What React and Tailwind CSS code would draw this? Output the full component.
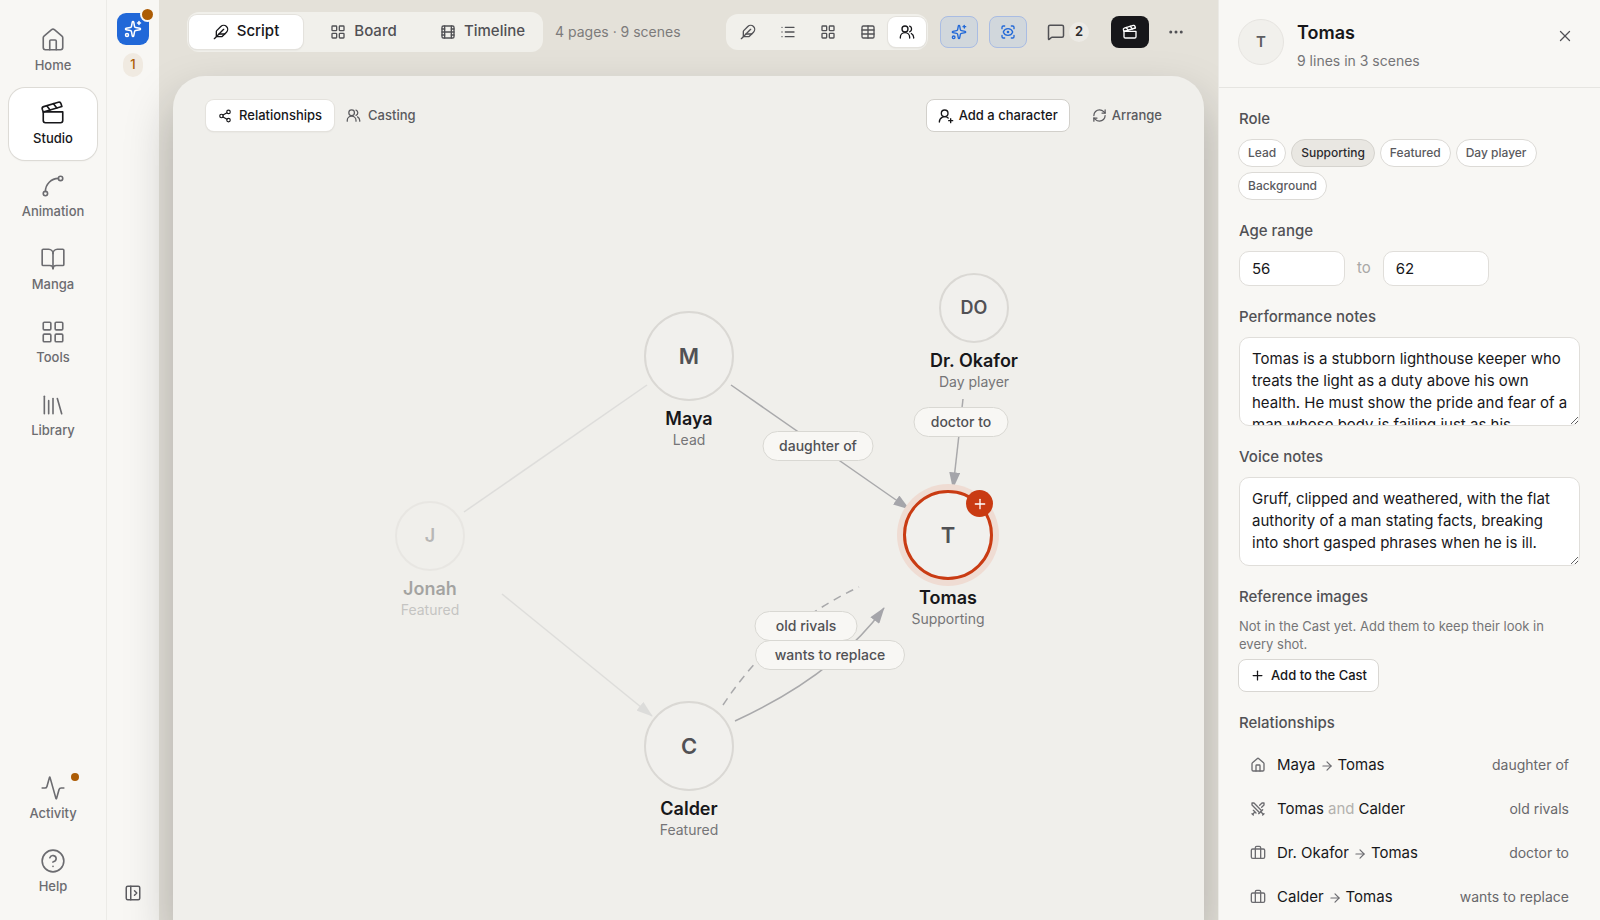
import React from 'react';
import {
  Activity,
  ArrowRight,
  BookOpen,
  Briefcase,
  CircleHelp,
  Clapperboard,
  Ellipsis,
  Feather,
  Film,
  House,
  LayoutGrid,
  Library,
  List,
  MessageSquare,
  PanelLeftOpen,
  Plus,
  RefreshCw,
  ScanEye,
  Share2,
  Sparkles,
  Spline,
  Swords,
  Table,
  UserRoundPlus,
  X,
} from 'lucide-react';

const People = ({ size }) => (
  <svg width={size} height={size} viewBox="0 0 24 24" fill="none" stroke="currentColor" strokeWidth="2" strokeLinecap="round" strokeLinejoin="round">
    <circle cx="9" cy="7.5" r="4.5" />
    <path d="M2 21v-1a7 7 0 0 1 14 0v1" />
    <path d="M16 3.3a4.5 4.5 0 0 1 0 8.4" />
    <path d="M18.5 14.2a7 7 0 0 1 3.5 5.8v1" />
  </svg>
);

const mainNav = [
  { label: 'Home', icon: House },
  { label: 'Studio', icon: Clapperboard, active: true },
  { label: 'Animation', icon: Spline },
  { label: 'Manga', icon: BookOpen },
  { label: 'Tools', icon: LayoutGrid },
  { label: 'Library', icon: Library },
];

const footerNav = [
  { label: 'Activity', icon: Activity, dot: true },
  { label: 'Help', icon: CircleHelp },
];

const modes = [
  { label: 'Script', icon: Feather, active: true },
  { label: 'Board', icon: LayoutGrid },
  { label: 'Timeline', icon: Film },
];

const views = [
  { label: 'Write', icon: Feather },
  { label: 'Outline', icon: List },
  { label: 'Cards', icon: LayoutGrid },
  { label: 'Breakdown', icon: Table },
  { label: 'Characters', icon: People, active: true },
];

// x / y are the centre of each circle on the canvas
const characters = [
  { name: 'Maya', initials: 'M', role: 'Lead', x: 516, y: 280, big: true },
  { name: 'Dr. Okafor', initials: 'DO', role: 'Day player', x: 801, y: 232 },
  { name: 'Tomas', initials: 'T', role: 'Supporting', x: 775, y: 459, big: true, selected: true },
  { name: 'Jonah', initials: 'J', role: 'Featured', x: 257, y: 460, faded: true },
  { name: 'Calder', initials: 'C', role: 'Featured', x: 516, y: 670, big: true },
];

const edgeLabels = [
  { text: 'daughter of', x: 645, y: 370, width: 111 },
  { text: 'doctor to', x: 788, y: 346, width: 95 },
  { text: 'old rivals', x: 633, y: 550, width: 103 },
  { text: 'wants to replace', x: 657, y: 579, width: 150 },
];

const roles = ['Lead', 'Supporting', 'Featured', 'Day player', 'Background'];

const relationships = [
  { from: 'Maya', to: 'Tomas', kind: 'daughter of', icon: House },
  { from: 'Tomas', to: 'Calder', kind: 'old rivals', icon: Swords, mutual: true },
  { from: 'Dr. Okafor', to: 'Tomas', kind: 'doctor to', icon: Briefcase },
  { from: 'Calder', to: 'Tomas', kind: 'wants to replace', icon: Briefcase },
];

const NavItem = ({ label, icon: Icon, active, dot }) => (
  <a
    href="#"
    className={
      active
        ? 'relative flex h-[72px] flex-col items-center rounded-2xl bg-white pt-3 text-[#17171a] shadow-[0_0_0_1px_#dddbd6,0_1px_2px_rgba(0,0,0,0.08)]'
        : 'relative flex h-[72px] flex-col items-center rounded-2xl pt-3 text-[#6c6c70]'
    }
  >
    <Icon size={26} strokeWidth={1.5} />
    <span className="mt-1 text-[13px] leading-4 font-medium">{label}</span>
    {dot && <span className="absolute top-[10px] right-[18px] size-2 rounded-full bg-[#ac5c05]" />}
  </a>
);

const Sidebar = () => (
  <nav className="flex w-[107px] shrink-0 flex-col justify-between border-r border-[#ecebe7] bg-[#f8f7f4] px-[9px] pt-[15px] pb-3">
    <div className="flex flex-col gap-px">
      {mainNav.map((item) => (
        <NavItem key={item.label} {...item} />
      ))}
    </div>
    <div className="flex flex-col gap-px">
      {footerNav.map((item) => (
        <NavItem key={item.label} {...item} />
      ))}
    </div>
  </nav>
);

const AssistantRail = () => (
  <aside className="flex w-[52px] shrink-0 flex-col items-center bg-[#f8f7f4] pt-[13px] pb-[18px]">
    <button aria-label="Assistant" className="relative flex size-8 items-center justify-center rounded-[9px] bg-[#2168d8] text-white">
      <Sparkles size={18} />
      <span className="absolute -top-1 -right-1 size-[11px] rounded-full bg-[#ac5c05] ring-2 ring-[#f8f7f4]" />
    </button>
    <span className="mt-2 flex h-6 w-5 items-center justify-center rounded-full bg-[#f0eae1] text-[13px] font-medium text-[#ac5c05]">1</span>
    <button aria-label="Open panel" className="mt-auto text-[#5d5d61]">
      <PanelLeftOpen size={18} />
    </button>
  </aside>
);

const TopBar = () => (
  <header className="flex h-[63px] items-center pr-[33px] pl-7">
    <div className="flex h-10 items-center gap-[2px] rounded-xl bg-[#f1f0eb] p-[2px]">
      {modes.map(({ label, icon: Icon, active }) => (
        <button
          key={label}
          className={
            active
              ? 'flex h-[34px] w-[114px] items-center justify-center gap-2 rounded-lg bg-white text-[15px] font-medium text-[#17171a] shadow-[0_0_0_1px_#e4e2dd,0_1px_2px_rgba(0,0,0,0.1)]'
              : 'flex h-[34px] w-[117px] items-center justify-center gap-2 rounded-lg text-[15px] font-medium text-[#515155]'
          }
        >
          <Icon size={16} />
          {label}
        </button>
      ))}
    </div>
    <p className="ml-3 text-sm text-[#7c7b7b]">4 pages · 9 scenes</p>

    <div className="ml-auto flex h-9 items-center rounded-xl bg-[#f1f0eb] p-[2px]">
      {views.map(({ label, icon: Icon, active }) => (
        <button
          key={label}
          aria-label={label}
          className={
            active
              ? 'flex h-[30px] w-[38px] items-center justify-center rounded-lg bg-white text-[#17171a] shadow-[0_0_0_1px_#e4e2dd,0_1px_2px_rgba(0,0,0,0.1)]'
              : 'flex h-[30px] w-10 items-center justify-center text-[#515155]'
          }
        >
          <Icon size={16} />
        </button>
      ))}
    </div>
    <div className="ml-3 flex items-center gap-[11px]">
      <button aria-label="Suggestions" className="flex h-8 w-[38px] items-center justify-center rounded-lg border border-[#a9bce3] bg-[#d1d7dc] text-[#2168d8]">
        <Sparkles size={16} />
      </button>
      <button aria-label="Focus" className="flex h-8 w-[38px] items-center justify-center rounded-lg border border-[#a9bce3] bg-[#d1d7dc] text-[#2168d8]">
        <ScanEye size={16} />
      </button>
    </div>
    <button aria-label="Comments" className="ml-5 flex items-center gap-1 text-[#515155]">
      <MessageSquare size={18} />
      <span className="flex size-5 items-center justify-center rounded-full bg-[#eceae5] text-[13px] font-semibold text-[#2b2b2e]">2</span>
    </button>
    <button aria-label="Shoot" className="ml-[22px] flex h-8 w-[38px] items-center justify-center rounded-lg bg-[#17171a] text-white">
      <Clapperboard size={16} />
    </button>
    <button aria-label="More" className="ml-[18px] text-[#515155]">
      <Ellipsis size={18} />
    </button>
  </header>
);

const Edges = () => (
  <svg className="absolute inset-0 h-full w-full" fill="none" stroke="#a9a9ab" strokeWidth="1.5">
    <defs>
      <marker id="arrow" viewBox="0 0 18 12" refX="17" refY="6" markerWidth="17" markerHeight="11" markerUnits="userSpaceOnUse" orient="auto">
        <path d="M0 0 L18 6 L0 12 z" fill="#a5a5aa" stroke="none" />
      </marker>
    </defs>
    <g opacity="0.25">
      <path d="M291 436 L474 309" />
      <path d="M329 518 L479 640" markerEnd="url(#arrow)" />
    </g>
    <path d="M558 309 L736 433" markerEnd="url(#arrow)" />
    <path d="M790 323 L780 412" markerEnd="url(#arrow)" />
    <path d="M550 629 Q602 550 686 511" strokeDasharray="8 6" />
    <path d="M562 645 Q662 599 711 532" markerEnd="url(#arrow)" />
  </svg>
);

const Character = ({ name, initials, role, x, y, big, selected, faded }) => {
  const radius = big ? 45 : 35;
  let circle = 'size-[70px] border-2 border-[#dad8d4] text-lg';
  if (big) circle = 'size-[90px] border-2 border-[#dad8d4] text-[22px]';
  if (selected) circle = 'size-[90px] border-3 border-[#c93b13] text-[22px] shadow-[0_0_0_6px_#efdcd3]';

  return (
    <div
      className={faded ? 'absolute flex -translate-x-1/2 flex-col items-center opacity-35' : 'absolute flex -translate-x-1/2 flex-col items-center'}
      style={{ left: x, top: y - radius }}
    >
      <div className={`relative flex items-center justify-center rounded-full bg-[#f1f0ed] font-semibold text-[#515155] ${circle}`}>
        {initials}
        {selected && (
          <button aria-label="Add a relationship" className="absolute -top-[3px] -right-[3px] flex size-[27px] items-center justify-center rounded-full bg-[#c93b13] text-white">
            <Plus size={16} />
          </button>
        )}
      </div>
      <h3 className="mt-[6px] text-lg leading-6 font-semibold whitespace-nowrap text-[#17171a]">{name}</h3>
      <p className="text-sm leading-[18px] whitespace-nowrap text-[#757577]">{role}</p>
    </div>
  );
};

const Canvas = () => (
  <main className="relative mx-[14px] mt-[13px] flex-1 rounded-t-[32px] bg-[#f0efeb] shadow-[0_24px_48px_rgba(23,23,26,0.26)]">
    <Edges />
    {characters.map((c) => (
      <Character key={c.name} {...c} />
    ))}
    {edgeLabels.map(({ text, x, y, width }) => (
      <span
        key={text}
        className="absolute flex h-[30px] -translate-x-1/2 -translate-y-1/2 items-center justify-center rounded-full border border-[#d9d8d3] bg-[#f8f7f4] text-sm font-medium whitespace-nowrap text-[#515155]"
        style={{ left: x, top: y, width }}
      >
        {text}
      </span>
    ))}
    <div className="relative flex items-center pt-[23px] pr-[42px] pl-[33px]">
      <button className="flex h-[31px] items-center gap-[7px] rounded-lg bg-white px-3 text-[13px] font-medium text-[#17171a] shadow-[0_0_0_1px_#e4e2dd,0_1px_2px_rgba(0,0,0,0.1)]">
        <Share2 size={14} />
        Relationships
      </button>
      <button className="ml-3 flex h-[31px] items-center gap-[7px] text-[13px] font-medium text-[#5a5a5e]">
        <People size={15} />
        Casting
      </button>
      <button className="ml-auto flex h-[33px] items-center gap-[5px] rounded-lg border border-[#d2d0cb] bg-white px-[11px] text-[13px] font-medium text-[#17171a]">
        <UserRoundPlus size={16} />
        Add a character
      </button>
      <button className="ml-[22px] flex h-[33px] items-center gap-[5px] text-[13px] font-medium text-[#5a5a5e]">
        <RefreshCw size={15} />
        Arrange
      </button>
    </div>
  </main>
);

const labelClass = 'mb-[10px] block text-[15px] leading-[21px] font-medium text-[#515155]';
const textareaClass =
  'block h-[89px] w-full resize-y overflow-hidden rounded-[10px] border border-[#e0deda] bg-white py-[10px] pr-2 pl-3 text-[15px] leading-[22px] text-[#17171a]';

const Inspector = () => (
  <aside className="relative flex w-[382px] shrink-0 flex-col border-l border-[#ebeae6] bg-[#f8f7f4]">
    <div className="flex h-[88px] shrink-0 border-b border-[#e6e5e1] pt-[19px] pr-[26px] pl-[19px]">
      <div className="flex size-[46px] items-center justify-center rounded-full border border-[#e6e4e0] bg-[#f1f0ec] text-[15px] font-semibold text-[#5d5d61]">T</div>
      <div className="ml-[13px]">
        <h2 className="text-lg leading-7 font-semibold text-[#17171a]">Tomas</h2>
        <p className="text-sm leading-7 text-[#757577]">9 lines in 3 scenes</p>
      </div>
      <button aria-label="Close" className="ml-auto self-start pt-2 text-[#515155]">
        <X size={18} strokeWidth={1.75} />
      </button>
    </div>

    <div className="flex flex-col gap-5 px-5 pt-5">
      <section>
        <h3 className={labelClass}>Role</h3>
        <div className="-ml-px flex flex-wrap gap-[5px]">
          {roles.map((role) => (
            <button
              key={role}
              className={
                role === 'Supporting'
                  ? 'h-7 rounded-full border border-[#d5d3ce] bg-[#e9e7e2] px-[9px] text-xs font-medium text-[#2b2b2e]'
                  : 'h-7 rounded-full border border-[#dcdad6] bg-white px-[9px] text-xs font-medium text-[#5a5a5e]'
              }
            >
              {role}
            </button>
          ))}
        </div>
      </section>

      <section>
        <label htmlFor="age-from" className={labelClass}>Age range</label>
        <div className="flex items-center gap-3 text-[15px]">
          <input id="age-from" defaultValue="56" className="h-[35px] w-[106px] rounded-[10px] border border-[#e0deda] bg-white px-3 text-[#17171a]" />
          <label htmlFor="age-to" className="text-[#a9a8a6]">to</label>
          <input id="age-to" defaultValue="62" className="h-[35px] w-[106px] rounded-[10px] border border-[#e0deda] bg-white px-3 text-[#17171a]" />
        </div>
      </section>

      <section>
        <label htmlFor="performance" className={labelClass}>Performance notes</label>
        <textarea
          id="performance"
          className={textareaClass}
          defaultValue="Tomas is a stubborn lighthouse keeper who treats the light as a duty above his own health. He must show the pride and fear of a man whose body is failing just as his"
        />
      </section>

      <section>
        <label htmlFor="voice" className={labelClass}>Voice notes</label>
        <textarea
          id="voice"
          className={textareaClass}
          defaultValue="Gruff, clipped and weathered, with the flat authority of a man stating facts, breaking into short gasped phrases when he is ill."
        />
      </section>

      <section>
        <h3 className={labelClass}>Reference images</h3>
        <p className="text-[13px] leading-[18px] text-[#757577]">Not in the Cast yet. Add them to keep their look in every shot.</p>
        <button className="mt-[6px] -ml-px flex h-[33px] items-center gap-[6px] rounded-lg border border-[#d9d7d3] bg-white px-[11px] text-[13px] font-medium text-[#17171a]">
          <Plus size={15} />
          Add to the Cast
        </button>
      </section>

      <section>
        <h3 className={labelClass}>Relationships</h3>
        <ul>
          {relationships.map(({ from, to, kind, icon: Icon, mutual }) => (
            <li key={kind} className="flex h-[44px] items-center px-[11px] text-[15px] text-[#17171a]">
              <Icon size={16} className="mr-[11px] text-[#6c6c70]" />
              {from}
              {mutual ? <span className="mx-1 text-[#b3b1ae]">and</span> : <ArrowRight size={14} className="mx-1 mt-px text-[#6c6c70]" />}
              {to}
              <span className="ml-auto text-sm text-[#68686b]">{kind}</span>
            </li>
          ))}
        </ul>
      </section>
    </div>
  </aside>
);

const App = () => {
  return (
    <div className="flex h-screen overflow-hidden bg-[#e4e1d9] font-['Inter','Liberation_Sans',sans-serif]">
      <Sidebar />
      <AssistantRail />
      <div className="relative flex min-w-0 flex-1 flex-col">
        <TopBar />
        <Canvas />
      </div>
      <Inspector />
    </div>
  );
};

export default App;
